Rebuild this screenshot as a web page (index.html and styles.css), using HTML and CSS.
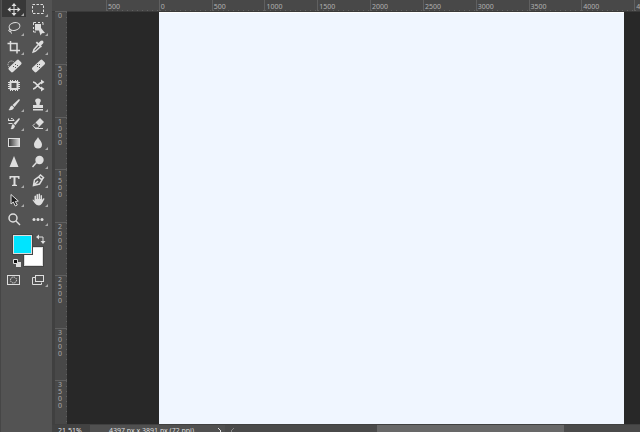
FILE: index.html
```html
<!DOCTYPE html>
<html lang="en">
<head>
    <meta charset="utf-8">
    <title>Image Editor</title>
    <link rel="stylesheet" href="styles.css">
</head>
<body>
    <div class="app">
        <aside class="toolbar">
            <div class="tools">
                <button class="tool more active" aria-label="Move"><svg viewBox="0 0 24 19"><path class="line" d="M12 5v9M7.500 9.500h9"/><path d="M12 3l2.500 3h-5zM12 16l2.500-3h-5zM5.500 9.500l3-2.500v5zM18.500 9.500l-3-2.500v5z"/></svg></button>
                <button class="tool more" aria-label="Marquee"><svg viewBox="0 0 24 19"><rect class="line" x="6.500" y="4.500" width="11" height="9" stroke-dasharray="2.500 1.500"/></svg></button>
                <button class="tool more" aria-label="Lasso"><svg viewBox="0 0 24 19"><ellipse class="line" cx="12.500" cy="7.500" rx="5.500" ry="3.800" transform="rotate(-15 12.500 7.500)"/><path class="line" d="M8 10c-2 1-1.500 3 .5 2.500s1-2-.5-2c0 2 .5 3 2 4"/></svg></button>
                <button class="tool more" aria-label="Object selection"><svg viewBox="0 0 24 19"><path class="line" d="M7.500 6V3.500H10M12 3.500h2M16 3.500h1V6M7.500 8v2M7.500 11.500V13H10"/><path d="M9 5h6v4l4 5-3 .3-1.500 2.200-1.500-5H9z"/></svg></button>
                <button class="tool more" aria-label="Crop"><svg viewBox="0 0 24 19"><path class="line thick" d="M8.500 3v9.500H18M5.500 5.500h9.500V15.500"/></svg></button>
                <button class="tool more" aria-label="Eyedropper"><svg viewBox="0 0 24 19"><path d="M12.500 5l2-2c2-1.500 4 .5 2.500 2.500l-2 2 1 1-1.300 1.300-5-5L11 3.500z"/><path class="line thick" d="M12 7l-4 4.500-.8 2.500 2.300-.8L14 9"/></svg></button>
                <button class="tool" aria-label="Spot healing"><svg viewBox="0 0 24 19"><circle class="line" cx="9.500" cy="7.500" r="3.500" stroke-dasharray="1 1"/><rect x="6" y="6" width="14" height="6" rx="1.500" transform="rotate(-43 13 9)"/><path class="dark" d="M11 9h1v1h-1zM13 7h1v1h-1zM13 10h1v1h-1zM15 8h1v1h-1z"/></svg></button>
                <button class="tool" aria-label="Healing brush"><svg viewBox="0 0 24 19"><rect x="5.500" y="6" width="14" height="6" rx="1.500" transform="rotate(-43 12.500 9)"/><path class="dark" d="M11 9h1v1h-1zM13 7h1v1h-1zM13 10h1v1h-1zM11 7h1v1h-1z"/></svg></button>
                <button class="tool" aria-label="Patch"><svg viewBox="0 0 24 19"><rect x="7.500" y="5" width="9" height="9" rx="1"/><rect class="dark" x="9.500" y="7" width="5" height="5"/><path class="line" d="M8.500 4v2M10.500 4v2M13.500 4v2M15.500 4v2M8.500 13v2M10.500 13v2M13.500 13v2M15.500 13v2M6 6.500h2M6 8.500h2M6 10.500h2M6 12.500h2M16 6.500h2M16 8.500h2M16 10.500h2M16 12.500h2"/></svg></button>
                <button class="tool" aria-label="Content-aware move"><svg viewBox="0 0 24 19"><path class="line thick" d="M7 6c4 0 5 7 10 7M7 13c4 0 5-7 10-7"/><path d="M15 3.500L18.500 6 15 8.500zM15 10.500l3.500 2.500-3.500 2.500z"/></svg></button>
                <button class="tool more" aria-label="Brush"><svg viewBox="0 0 24 19"><path d="M17 4c1 .5 1 1 .5 1.800L12.500 12l-2-2zM10 10.500l2 2c-.5 2.500-3 3-5.500 2.500 1.500-1 1-3.500 3.500-4.500z"/></svg></button>
                <button class="tool more" aria-label="Clone stamp"><svg viewBox="0 0 24 19"><path d="M12 3.500c3 0 3.500 2.500 2 4L13.500 10H17v3H7v-3h3.500L10 7.500c-1.500-1.500-1-4 2-4zM7 14h10v1.500H7z"/></svg></button>
                <button class="tool more" aria-label="History brush"><svg viewBox="0 0 24 19"><path d="M17 4c1 .5 1 1 .5 1.800L13.500 11l-2-1.500zM11 10l2 2c-.5 2.500-2 3.500-4.500 3 1.500-1 .5-4 2.500-5z"/><path class="line" d="M6.500 9.500h4M6 6.500h6M9 4.500c2 0 3 1 3 2.500M6.500 4.500v2"/></svg></button>
                <button class="tool more" aria-label="Eraser"><svg viewBox="0 0 24 19"><path d="M14 4l4 4-4.500 4.500-4-4z"/><path class="line" d="M9 9.500l-2 2 2 2.500h2.500l2-2M9 14.500h8"/></svg></button>
                <button class="tool" aria-label="Gradient"><svg viewBox="0 0 24 19"><defs><linearGradient id="fade"><stop stop-color="#333"/><stop offset="1" stop-color="#ddd"/></linearGradient></defs><rect class="line" x="6.500" y="5.500" width="11" height="8" style="fill:url(#fade)"/></svg></button>
                <button class="tool more" aria-label="Blur"><svg viewBox="0 0 24 19"><path d="M12 4c1 2.500 4 4.500 4 7.500a4 4 0 0 1-8 0C8 8.500 11 6.500 12 4z"/></svg></button>
                <button class="tool" aria-label="Sharpen"><svg viewBox="0 0 24 19"><path d="M12 4l4.500 11h-9z"/></svg></button>
                <button class="tool more" aria-label="Dodge"><svg viewBox="0 0 24 19"><circle cx="13.500" cy="8" r="4.200"/><path class="line thick" d="M10.500 10.500l-4 4.500"/></svg></button>
                <button class="tool more" aria-label="Type"><svg viewBox="0 0 24 19"><path d="M7.500 5h10v3h-1l-.8-1.500h-2.200v7l1.500.5v1h-5v-1l1.500-.5v-7H9.300L8.500 8h-1z"/></svg></button>
                <button class="tool more" aria-label="Pen"><svg viewBox="0 0 24 19"><path class="line thick" d="M7.500 14.500l1-5.500 4-3 3.500 3-2.500 4zM13 5.500l1.500-1.500 3 2.500L16 8.500M8 14l4-4"/></svg></button>
                <button class="tool more" aria-label="Path selection"><svg viewBox="0 0 24 19"><path class="pointer" d="M9 4.500v9.500l2.300-2 2 4 2-1-2-3.500 3-.5z"/></svg></button>
                <button class="tool more" aria-label="Hand"><svg viewBox="0 0 24 19"><path d="M8.500 11V6q1-1 1.500 0v3h.5V4.500q1-1 1.500 0V9h.5V4q1-1 1.500 0v5h.5V5.500q1-1 1.500 0V10l1-1.500q1.500-.5 1.500.5L16 13.500q-1.500 2-3 2-2.500 0-4-2L6.500 10q.5-1.500 2 1z"/></svg></button>
                <button class="tool" aria-label="Zoom"><svg viewBox="0 0 24 19"><circle class="line thick" cx="11" cy="9" r="4"/><path class="line thick" d="M14 12l4 4"/></svg></button>
                <button class="tool more" aria-label="Edit toolbar"><svg viewBox="0 0 24 19"><circle cx="8" cy="10.500" r="1.500"/><circle cx="12" cy="10.500" r="1.500"/><circle cx="16" cy="10.500" r="1.500"/></svg></button>
            </div>

            <div class="colors">
                <button class="swatch background" aria-label="Background color"></button>
                <button class="swatch foreground" aria-label="Foreground color"></button>
                <button class="mini swap" aria-label="Swap colors"><svg viewBox="0 0 10 10"><path class="line" d="M2.500 3H7v4.500"/><path d="M0 3l3-2.500v5zM7 10L4.500 7h5z"/></svg></button>
                <button class="mini default" aria-label="Default colors"><svg viewBox="0 0 10 10"><path d="M4 4h5v5H4z"/><path class="black" d="M1.500 1.500h4v4h-4z"/></svg></button>
            </div>

            <div class="tools">
                <button class="tool" aria-label="Quick mask"><svg viewBox="0 0 24 19"><rect class="line" x="5.500" y="5.500" width="12" height="9"/><circle class="line" cx="11.500" cy="10" r="3" stroke-dasharray="1.500 .8"/></svg></button>
                <button class="tool more" aria-label="Screen mode"><svg viewBox="0 0 24 19"><path class="line" d="M9 7.500H6.500v7h9v-2"/><rect class="line" x="9.500" y="5.500" width="8" height="6"/></svg></button>
            </div>
        </aside>

        <main class="document">
            <div class="ruler-top">
                <span>500</span>
                <span>0</span>
                <span>500</span>
                <span>1000</span>
                <span>1500</span>
                <span>2000</span>
                <span>2500</span>
                <span>3000</span>
                <span>3500</span>
                <span>4000</span>
                <span>4500</span>
            </div>
            <div class="ruler-left">
                <div class="marks">
                    <span>0</span>
                    <span>500</span>
                    <span>1000</span>
                    <span>1500</span>
                    <span>2000</span>
                    <span>2500</span>
                    <span>3000</span>
                    <span>3500</span>
                </div>
            </div>
            <div class="workspace">
                <div class="canvas"></div>
            </div>
            <footer class="status">
                <input class="zoom" type="text" value="21.51%" aria-label="Zoom level">
                <div class="info">
                    <span>4397 px x 3891 px (72 ppi)</span>
                    <button class="arrow" aria-label="Document info"><svg viewBox="0 0 6 8"><path class="line" d="M1 1l3 3-3 3"/></svg></button>
                </div>
                <div class="scrollbar">
                    <button class="arrow dim" aria-label="Scroll left"><svg viewBox="0 0 6 8"><path class="line" d="M4 1L1 4l3 3"/></svg></button>
                    <div class="thumb"></div>
                </div>
            </footer>
        </main>
    </div>
</body>
</html>
```
FILE: styles.css
```css
* {
    box-sizing: border-box;
}
body {
    margin: 0;
    background: #535353;
    color: #ddd;
    font-family: "Noto Sans", sans-serif;
    overflow: hidden;
}
button {
    padding: 0;
    border: 0;
    background: none;
}
svg {
    display: block;
    width: 100%;
    height: 100%;
    fill: #dedede;
}
.line {
    fill: none;
    stroke: #dedede;
    stroke-width: 1;
}
.thick {
    stroke-width: 1.5;
}
.dark {
    fill: #535353;
}
.pointer {
    fill: #222;
    stroke: #dedede;
}
.black {
    fill: #111;
    stroke: #dedede;
}
.app {
    display: flex;
    height: 100vh;
}

/* toolbar */
.toolbar {
    width: 52px;
    flex-shrink: 0;
    padding: 0 1px;
    background: #535353;
    border-left: 1px solid #464646;
}
.tools {
    display: grid;
    grid-template-columns: 24px 24px;
    grid-auto-rows: 19px;
}
.tool {
    position: relative;
}
.tool.active {
    background: #383838;
    height: 17px;
}
.tool.active svg {
    height: 19px;
}
.more::after {
    content: "";
    position: absolute;
    right: 2px;
    bottom: 2px;
    border-left: 3px solid transparent;
    border-bottom: 3px solid #aaa;
}
.active::after {
    bottom: 1px;
}
.colors {
    position: relative;
    height: 42px;
}
.swatch {
    position: absolute;
    width: 19px;
    height: 19px;
    border: 1px solid #ddd;
}
.foreground {
    left: 11px;
    top: 7px;
    background: #00e4ff;
    outline: 1px solid #444;
}
.background {
    left: 22px;
    top: 19px;
    background: #fff;
    outline: 1px solid #444;
}
.mini {
    position: absolute;
    width: 10px;
    height: 10px;
}
.swap {
    left: 34px;
    top: 6px;
}
.default {
    left: 10px;
    top: 30px;
}

/* document window */
.document {
    flex: 1;
    min-width: 0;
    display: grid;
    grid-template-columns: 15px 1fr;
    grid-template-rows: 12px 1fr 8px;
    overflow: hidden;
}
.ruler-top {
    grid-column: 1 / 3;
    display: grid;
    grid-template-columns: repeat(11, 1fr);
    padding-left: 54px;
    margin-right: -47px;
    background: #484848;
    border-bottom: 1px solid #3a3a3a;
}
.ruler-top span {
    border-left: 1px solid #606060;
    padding: 2px 0 0 1px;
    font-size: 7px;
    line-height: 9px;
    color: #b0b0b0;
    background: repeating-linear-gradient(90deg, #606060 0 1px, transparent 1px 5px) bottom / 100% 1px no-repeat;
}
.ruler-left {
    min-height: 0;
    background: #484848;
    border-left: 3px solid #404040;
}
.marks {
    display: grid;
    grid-template-rows: repeat(8, 1fr);
    height: calc(100% + 10px);
    margin-top: -1px;
}
.marks span {
    border-top: 1px solid #606060;
    padding: 0 3px 0 3px;
    font-size: 7px;
    line-height: 7px;
    color: #a8a8a8;
    word-break: break-all;
    min-height: 0;
    background: repeating-linear-gradient(#606060 0 1px, transparent 1px 5px) right / 1px 100% no-repeat;
}
.workspace {
    min-width: 0;
    min-height: 0;
    background: #282828;
    padding: 0 16px 0 92px;
}
.canvas {
    height: 100%;
    background: #f0f6ff;
    border-top: 1px solid #fff;
}

/* status bar */
.status {
    grid-column: 1 / 3;
    display: flex;
    background: #484848;
    border-top: 1px solid #404040;
    overflow: hidden;
    font-size: 7px;
    line-height: 11px;
}
.zoom {
    width: 38px;
    height: 11px;
    padding: 0 0 0 6px;
    border: 0;
    background: #424242;
    color: #e4e4e4;
    font: inherit;
}
.info {
    display: flex;
    justify-content: space-between;
    width: 135px;
    height: 11px;
    padding: 0 2px 0 19px;
    background: #505050;
    color: #ddd;
}
.arrow {
    width: 6px;
    height: 8px;
    margin-top: 2px;
}
.scrollbar {
    flex: 1;
    display: flex;
    justify-content: space-between;
    padding: 0 76px 0 5px;
    background: #4a4a4a;
}
.dim {
    opacity: 0.4;
}
.thumb {
    width: 187px;
    height: 11px;
    background: #686868;
}
```
